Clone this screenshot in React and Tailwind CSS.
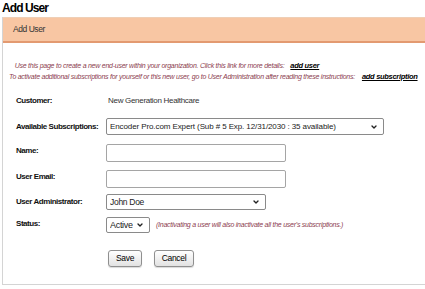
import React from "react";
import { ChevronDown } from "lucide-react";

const font = "font-['Liberation_Sans',Arial,sans-serif]";

const Select = ({ value, width, textCls = "text-[8px] tracking-[-0.1px]" }) => (
  <div className={`relative h-full ${width}`}>
    <select
      defaultValue={value}
      className={`block h-full w-full appearance-none rounded-[2px] border border-[#8a8a8a] bg-white py-0 pl-[3px] pr-4 leading-none text-[#222] outline-none ${textCls}`}
    >
      <option>{value}</option>
    </select>
    <ChevronDown
      size={8}
      strokeWidth={4}
      className="pointer-events-none absolute right-[6px] top-1/2 -translate-y-1/2 text-[#222]"
    />
  </div>
);

const Label = ({ children, className = "" }) => (
  <div className={`w-[90px] shrink-0 whitespace-nowrap text-[8px] font-bold tracking-[-0.45px] text-[#111] ${className}`}>
    {children}
  </div>
);

const inputCls =
  "block h-full w-[180px] rounded-[2px] border border-[#a5a5a5] bg-white px-1 text-[8px] outline-none";

const btnCls =
  "h-full rounded-[3px] border border-[#8f8f8f] bg-gradient-to-b from-white to-[#e2e2e2] text-[8.5px] tracking-[-0.3px] text-black shadow-[0_1px_1px_rgba(0,0,0,0.15)]";

export default function App() {
  return (
    <div className={`h-[289px] w-[425px] overflow-hidden bg-white ${font}`}>
      {/* page title */}
      <div className="h-[17px] pl-[2px] text-[12px] font-bold leading-[17px] tracking-[-0.9px] text-black">
        Add User
      </div>

      <div className="ml-[2px] w-[440px] border-b border-l border-[#d4d4d4]">
        {/* orange header bar */}
        <div className="flex h-[26px] items-center border-t border-b-2 border-t-[#efcfb6] border-b-[#e39a71] bg-[#f8c6a3] pl-[10px] text-[8.5px] tracking-[-0.45px] text-[#333]">
          Add User
        </div>

        <div className="pb-[17px] pl-[13px]">
          {/* instructions */}
          <div className="pt-[17px] text-[7px] italic leading-[11px] tracking-[-0.25px] text-[#8c3d4f]">
            <div className="ml-[-3px] whitespace-nowrap">
              &nbsp;Use this page to create a new end-user within your organization. Click this link for more details:
              <span className="ml-[6px] text-[7.5px] font-bold tracking-[-0.3px] text-black underline">add user</span>
            </div>
            <div className="ml-[-7px] whitespace-nowrap">
              To activate additional subscriptions for yourself or this new user, go to User Administration after reading these instructions:
              <span className="ml-[7px] text-[7.5px] font-bold tracking-[-0.3px] text-black underline">add subscription</span>
            </div>
          </div>

          {/* customer */}
          <div className="mt-[12px] flex h-[13px] items-center">
            <Label>Customer:</Label>
            <div className="pl-[2px] text-[8px] tracking-[-0.3px] text-[#333]">New Generation Healthcare</div>
          </div>

          {/* subscriptions */}
          <div className="mt-[11px] flex h-[17px] items-center">
            <Label>Available Subscriptions:</Label>
            <Select
              width="w-[278px]"
              value="Encoder Pro.com Expert (Sub # 5 Exp. 12/31/2030 : 35 available)"
            />
          </div>

          {/* name */}
          <div className="mt-[9px] flex h-[18px] items-start">
            <Label className="pt-[1px]">Name:</Label>
            <input className={inputCls} />
          </div>

          {/* email */}
          <div className="mt-[8px] flex h-[18px] items-start">
            <Label className="pt-[1px]">User Email:</Label>
            <input className={inputCls} />
          </div>

          {/* user administrator */}
          <div className="mt-[6px] flex h-[16px] items-center">
            <Label>User Administrator:</Label>
            <Select width="w-[160px]" value="John Doe" textCls="text-[8.5px] tracking-[-0.3px]" />
          </div>

          {/* status */}
          <div className="mt-[7px] flex h-[16px] items-center">
            <Label className="pb-[3px]">Status:</Label>
            <Select width="w-[44px]" value="Active" textCls="text-[9px] tracking-[-0.3px]" />
            <div className="ml-[6px] text-[7px] italic tracking-[-0.25px] text-[#8c3d4f]">
              (Inactivating a user will also inactivate all the user's subscriptions.)
            </div>
          </div>

          {/* buttons */}
          <div className="mt-[17px] flex h-[17px] gap-[12px] pl-[92px]">
            <button className={`${btnCls} w-[34px]`}>Save</button>
            <button className={`${btnCls} w-[40px]`}>Cancel</button>
          </div>
        </div>
      </div>
    </div>
  );
}
